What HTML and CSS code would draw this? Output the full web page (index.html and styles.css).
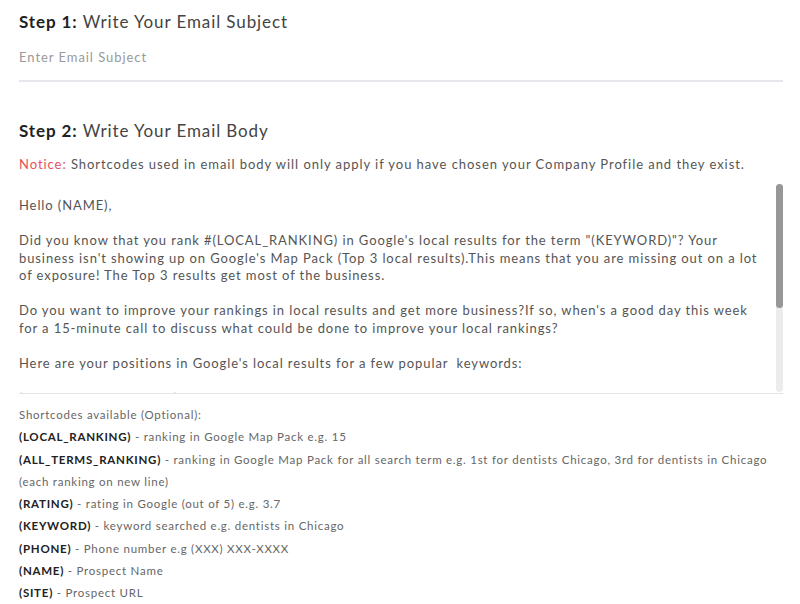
FILE: index.html
```html
<!DOCTYPE html>
<html lang="en">
<head>
    <meta charset="UTF-8">
    <meta name="viewport" content="width=device-width, initial-scale=1.0">
    <title>Email Template</title>
    <link rel="stylesheet" href="styles.css">
</head>
<body>
    <h2 class="step"><b>Step 1:</b> Write Your Email Subject</h2>
    <input type="text" class="subject" placeholder="Enter Email Subject">

    <h2 class="step step2"><b>Step 2:</b> Write Your Email Body</h2>
    <p class="notice"><span>Notice:</span> Shortcodes used in email body will only apply if you have chosen your Company Profile and they exist.</p>
    <div class="editor">
        <textarea class="body-text" spellcheck="false">Hello (NAME),

Did you know that you rank #(LOCAL_RANKING) in Google's local results for the term "(KEYWORD)"? Your
business isn't showing up on Google's Map Pack (Top 3 local results).This means that you are missing out on a lot
of exposure! The Top 3 results get most of the business.

Do you want to improve your rankings in local results and get more business?If so, when's a good day this week
for a 15-minute call to discuss what could be done to improve your local rankings?

Here are your positions in Google's local results for a few popular  keywords:

(ALL_TERMS_RANKING)

Looking forward to hearing from you.

Thanks,
(PHONE)
(SITE)</textarea>
        <div class="scroll-track"><div class="scroll-thumb"></div></div>
    </div>

    <div class="codes">
        <p>Shortcodes available (Optional):</p>
        <p><b>(LOCAL_RANKING)</b> - ranking in Google Map Pack e.g. 15</p>
        <p><b>(ALL_TERMS_RANKING)</b> - ranking in Google Map Pack for all search term e.g. 1st for dentists Chicago, 3rd for dentists in Chicago</p>
        <p>(each ranking on new line)</p>
        <p><b>(RATING)</b> - rating in Google (out of 5) e.g. 3.7</p>
        <p><b>(KEYWORD)</b> - keyword searched e.g. dentists in Chicago</p>
        <p><b>(PHONE)</b> - Phone number e.g (XXX) XXX-XXXX</p>
        <p><b>(NAME)</b> - Prospect Name</p>
        <p><b>(SITE)</b> - Prospect URL</p>
    </div>
</body>
</html>
```

FILE: styles.css
```css
body{
    margin: 0px;
    padding: 0px 17px 0px 19px;
    background-color: white;
    font-family: Lato, "Open Sans", sans-serif;
    color: #555;
}

.step{
    margin: 11px 0px 0px 0px;
    font-size: 17px;
    line-height: 22px;
    font-weight: normal;
    letter-spacing: 0.9px;
    color: #444;
}

.step b{
    color: #222;
}

.step2{
    margin-top: 38px;
}

input.subject{
    display: block;
    width: 100%;
    box-sizing: border-box;
    border: none;
    border-bottom: 2px solid #e6e6ec;
    padding: 15px 0px 14px 0px;
    font-family: inherit;
    font-size: 13px;
    line-height: 18px;
    letter-spacing: 0.95px;
    outline: none;
}

input.subject::placeholder{
    color: #9a9a9a;
}

.notice{
    margin: 13px 0px 0px 0px;
    font-size: 13px;
    line-height: 18px;
    letter-spacing: 0.95px;
    color: #555;
}

.notice span{
    color: #e8505b;
}

.editor{
    position: relative;
    margin-top: 10px;
}

textarea.body-text{
    display: block;
    width: 100%;
    height: 211px;
    box-sizing: border-box;
    padding: 14px 10px 14px 0px;
    border: none;
    border-bottom: 1px solid #e4e4e8;
    resize: none;
    outline: none;
    white-space: pre;
    overflow-x: hidden;
    overflow-y: scroll;
    scrollbar-width: none;
    font-family: inherit;
    font-size: 13px;
    line-height: 17.5px;
    letter-spacing: 0.9px;
    color: #555;
}

textarea.body-text::-webkit-scrollbar{
    display: none;
}

.scroll-track{
    position: absolute;
    top: 1px;
    right: 0px;
    bottom: 2px;
    width: 7px;
    background-color: #ececec;
    border-radius: 4px;
}

.scroll-thumb{
    height: 124px;
    background-color: #979797;
    border-radius: 4px;
}

.codes{
    margin-top: 10px;
}

.codes p{
    margin: 0px;
    font-size: 11.5px;
    line-height: 22.3px;
    letter-spacing: 0.75px;
    color: #666;
}

.codes b{
    color: #222;
}
```
